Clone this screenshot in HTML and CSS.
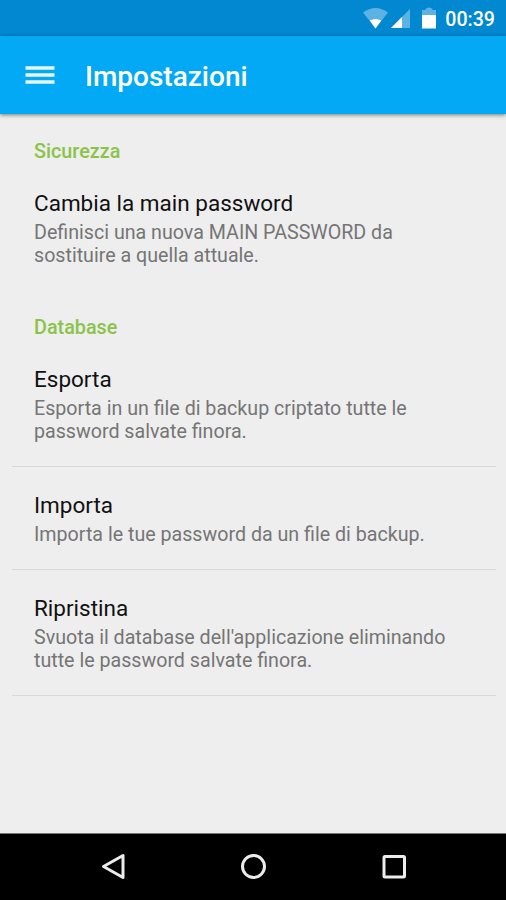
FILE: index.html
```html
<!DOCTYPE html>
<html lang="it">
<head>
<meta charset="utf-8">
<title>Impostazioni</title>
<link rel="stylesheet" href="styles.css">
</head>
<body>
<div class="screen">
  <div class="status">
    <svg class="status-icons" width="83" height="36" viewBox="0 0 83 36">
      <path d="M3 12.500Q15.500 3.500 28 12.500L15.500 28.500Z" fill="#5bb2e3"/>
      <path d="M9.800 20.500Q15.500 17.500 21.200 20.500L15.500 28.500Z" fill="#fff"/>
      <path d="M50 9V28H31Z" fill="#5bb2e3"/>
      <path d="M42 17V28H31Z" fill="#fff"/>
      <path d="M62 10h3Q66 7.500 69 7.500T73 10h3v6H62Z" fill="#5bb2e3"/>
      <path d="M62 15H76V28.500H62Z" fill="#fff"/>
    </svg>
    <span class="clock">00:39</span>
  </div>
  <header class="bar">
    <svg class="menu" width="30" height="20" viewBox="0 0 30 20"><path d="M.5 3H29.500M.5 10H29.500M.5 17H29.500" stroke="#e6f6fe" stroke-width="3.400"/></svg>
    <h1>Impostazioni</h1>
  </header>
  <main>
    <h2>Sicurezza</h2>
    <section class="item last"><h3>Cambia la main password</h3><p>Definisci una nuova MAIN PASSWORD da<br>sostituire a quella attuale.</p></section>
    <h2>Database</h2>
    <section class="item"><h3>Esporta</h3><p>Esporta in un file di backup criptato tutte le<br>password salvate finora.</p></section>
    <section class="item"><h3>Importa</h3><p>Importa le tue password da un file di backup.</p></section>
    <section class="item"><h3>Ripristina</h3><p>Svuota il database dell'applicazione eliminando<br>tutte le password salvate finora.</p></section>
  </main>
  <nav>
    <svg width="506" height="66" viewBox="0 1 506 66" fill="none" stroke="#ececec" stroke-width="3"><path d="M123 22.500V44.500L103.500 33.500Z" stroke-linejoin="round"/><circle cx="253.500" cy="33.500" r="11"/><rect x="384" y="23.500" width="20.500" height="20.500" rx="1"/></svg>
  </nav>
</div>
</body>
</html>
```

FILE: styles.css
```css
* { box-sizing: border-box; }
body { margin: 0; font-family: Roboto, sans-serif; }
.screen { width: 506px; height: 900px; display: flex; flex-direction: column; background: #eee; }
.status { height: 36px; background: #0288d1; display: flex; justify-content: flex-end; align-items: center; padding-right: 11px; color: #fff; }
.status-icons { margin-right: 2px; }
.clock { font-size: 19.6px; font-weight: 500; line-height: 34px; padding-top: 4px; }
.bar { height: 78px; background: #03a9f4; display: flex; align-items: center; padding-left: 25px; gap: 30px; color: #fff; box-shadow: 0 1px 4px rgba(0,0,0,.5); }
h1, h2, h3, p { margin: 0; }
h1 { font-size: 28px; font-weight: 500; line-height: 40px; padding-top: 4px; }
main { flex: 1; padding: 24px 10px 0 12px; }
h2 { color: #8bc34a; font-size: 19.8px; font-weight: 500; line-height: 27px; padding-left: 22px; }
.item { padding: 24px 22px 23px; border-bottom: 1px solid #d8d8d8; }
h3 { color: #111; font-size: 22.5px; font-weight: 400; line-height: 29px; }
p { margin-top: 3px; color: #757575; font-size: 19.65px; line-height: 23px; white-space: nowrap; }
.last { border: 0; margin-bottom: 24px; }
nav { height: 67px; background: #000; border-top: 1px solid #777; }
nav svg { display: block; }
```
